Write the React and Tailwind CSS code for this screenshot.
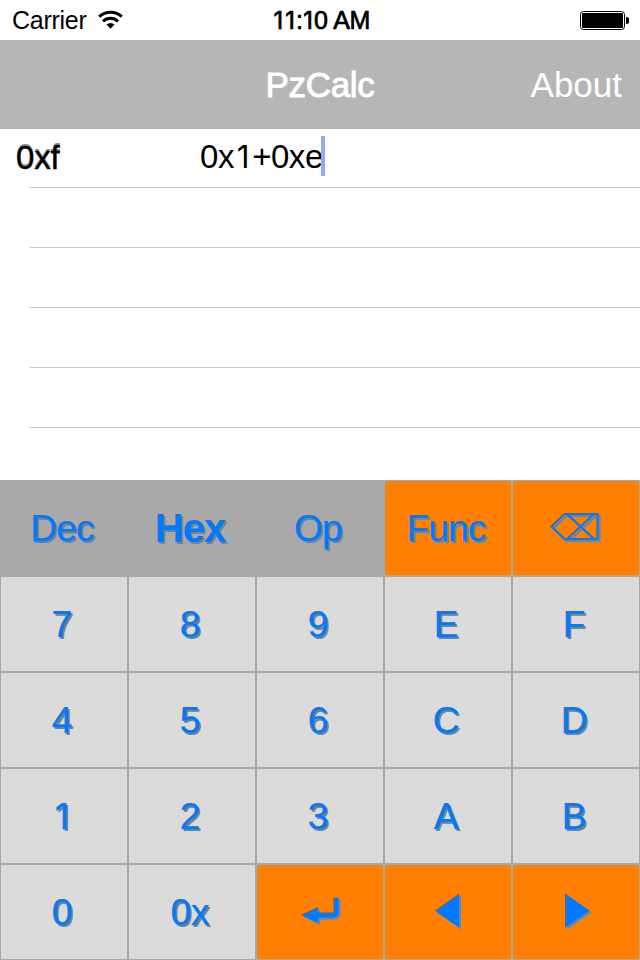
import React from "react";

const BLUE = "#007aff";

// A "1" without a foot serif, set on the width of the other digits.
function One() {
  return (
    <span className="inline-block w-[0.58em] text-center font-['Inter'] text-[0.95em] leading-none tracking-normal">1</span>
  );
}

function StatusBar() {
  return (
    <header className="grid h-10 grid-cols-[1fr_auto_1fr] items-center bg-white pr-[11px] pl-3 text-[25px] leading-none text-black">
      <div className="flex items-center gap-[11px]">
        <span className="w-[75px] pt-px tracking-[-0.27px]">Carrier</span>
        <svg width="26" height="20" viewBox="0 0 26 20" fill="none" stroke="#000">
          <path d="M1.2 6.7A16.6 16.6 0 0 1 23.8 6.7" strokeWidth="3" />
          <path d="M5 11.3A11 11 0 0 1 20 11.3" strokeWidth="3" />
          <path d="M8.5 14.6A6 6 0 0 1 16.5 14.6L12.5 18.8Z" fill="#000" stroke="none" />
        </svg>
      </div>
      <div className="pt-px tracking-[-0.6px] [word-spacing:1px] [-webkit-text-stroke:0.7px_#000]">
        <span className="-mr-[2px]"><One /></span>
        <span className="-mr-px"><One /></span>:<span className="-mr-[1px] -ml-[1px]"><One /></span>0 AM
      </div>
      <svg className="justify-self-end" width="49" height="19" viewBox="0 0 49 19">
        <rect x="0.5" y="0.5" width="44" height="18" rx="3" fill="none" stroke="#000" />
        <rect x="2" y="2" width="41" height="15" rx="1" />
        <path d="M46 6a3.4 3.4 0 0 1 0 7z" />
      </svg>
    </header>
  );
}

function NavBar() {
  return (
    <nav className="grid h-[89px] grid-cols-[1fr_auto_1fr] items-center border-b border-[#b0b0b0] bg-[#b6b6b6] pr-[18px] pl-[18px] text-[35px] leading-none text-white">
      <span />
      <span className="tracking-[-0.3px] [-webkit-text-stroke:0.9px_#fff]">PzCalc</span>
      <span className="justify-self-end">About</span>
    </nav>
  );
}

function History() {
  return (
    <main className="h-[351px] bg-white text-[33px] leading-none text-black">
      <div className="flex h-[58px] items-center pb-[2px] pl-4">
        <span className="w-[184px] tracking-[-0.2px] [-webkit-text-stroke:0.4px_#000] [text-shadow:0_-2px_0_#888]">0xf</span>
        <span className="w-[123px] whitespace-nowrap tracking-[-0.45px]">0x<One />+0xe</span>
        <span className="-mt-[2px] -ml-[2px] h-10 w-1 bg-[#92a9f8]" />
      </div>
      {[0, 1, 2, 3, 4].map((n) => (
        <div key={n} className="ml-[30px] h-[60px] border-t border-[#c8c7cc]" />
      ))}
    </main>
  );
}

function Glyph({ children }) {
  return (
    <svg
      className="block [filter:drop-shadow(2px_2px_0_#808080)]"
      width="128"
      height="96"
      viewBox="0 0 128 96"
      fill="none"
      stroke={BLUE}
    >
      {children}
    </svg>
  );
}

const backspace = (
  <Glyph>
    <path d="M39.5 46.5L52.5 34H85.5V59H52.5ZM55 34L82 59M82 34L55 59" strokeWidth="2.2" />
  </Glyph>
);
const enter = (
  <Glyph>
    <path d="M62 51H76Q80 51 80 47V33.5" strokeWidth="5" />
    <path d="M45 50.7L62 43V59Z" fill={BLUE} stroke="none" />
  </Glyph>
);
const left = (
  <Glyph>
    <path d="M51 46.5L75 29.5V63.5Z" fill={BLUE} stroke="none" />
  </Glyph>
);
const right = (
  <Glyph>
    <path d="M77.5 46.5L53 29.5V63.5Z" fill={BLUE} stroke="none" />
  </Glyph>
);

const keys = [
  ["Dec", "mode"], ["Hex", "active"], ["Op", "mode"], ["Func", "action"], [backspace, "action"],
  ["7"], ["8"], ["9"], ["E"], ["F"],
  ["4"], ["5"], ["6"], ["C"], ["D"],
  [<One />], ["2"], ["3"], ["A"], ["B"],
  ["0"], ["0x"], [enter, "action"], [left, "action"], [right, "action"],
];

const tones = {
  mode: "bg-[#a9a9a9] text-[37px] tracking-[-0.8px] [-webkit-text-stroke:0.25px_#007aff]",
  active: "bg-[#a9a9a9] text-[40px] font-bold tracking-[-1px]",
  action: "bg-[#ff8000] text-[37px] tracking-[-0.8px] [-webkit-text-stroke:0.25px_#007aff]",
  plain: "bg-[#dbdbdb] text-[37px] [-webkit-text-stroke:0.25px_#007aff]",
};

function Keypad() {
  return (
    <section className="grid grid-cols-5 text-[#007aff]">
      {keys.map(([label, tone = "plain"], i) => (
        <button
          key={i}
          className={`flex h-24 items-center justify-center border border-[#a9a9a9] ${tones[tone]}`}
        >
          {React.isValidElement(label) && label.type === Glyph ? (
            <span className="-m-px">{label}</span>
          ) : (
            <span className="pr-[4px] leading-none [text-shadow:2px_2px_0_#808080]">{label}</span>
          )}
        </button>
      ))}
    </section>
  );
}

export default function App() {
  return (
    <div className="h-[960px] w-[640px] overflow-hidden bg-white font-['Liberation_Sans',Arial,sans-serif]">
      <StatusBar />
      <NavBar />
      <History />
      <Keypad />
    </div>
  );
}
